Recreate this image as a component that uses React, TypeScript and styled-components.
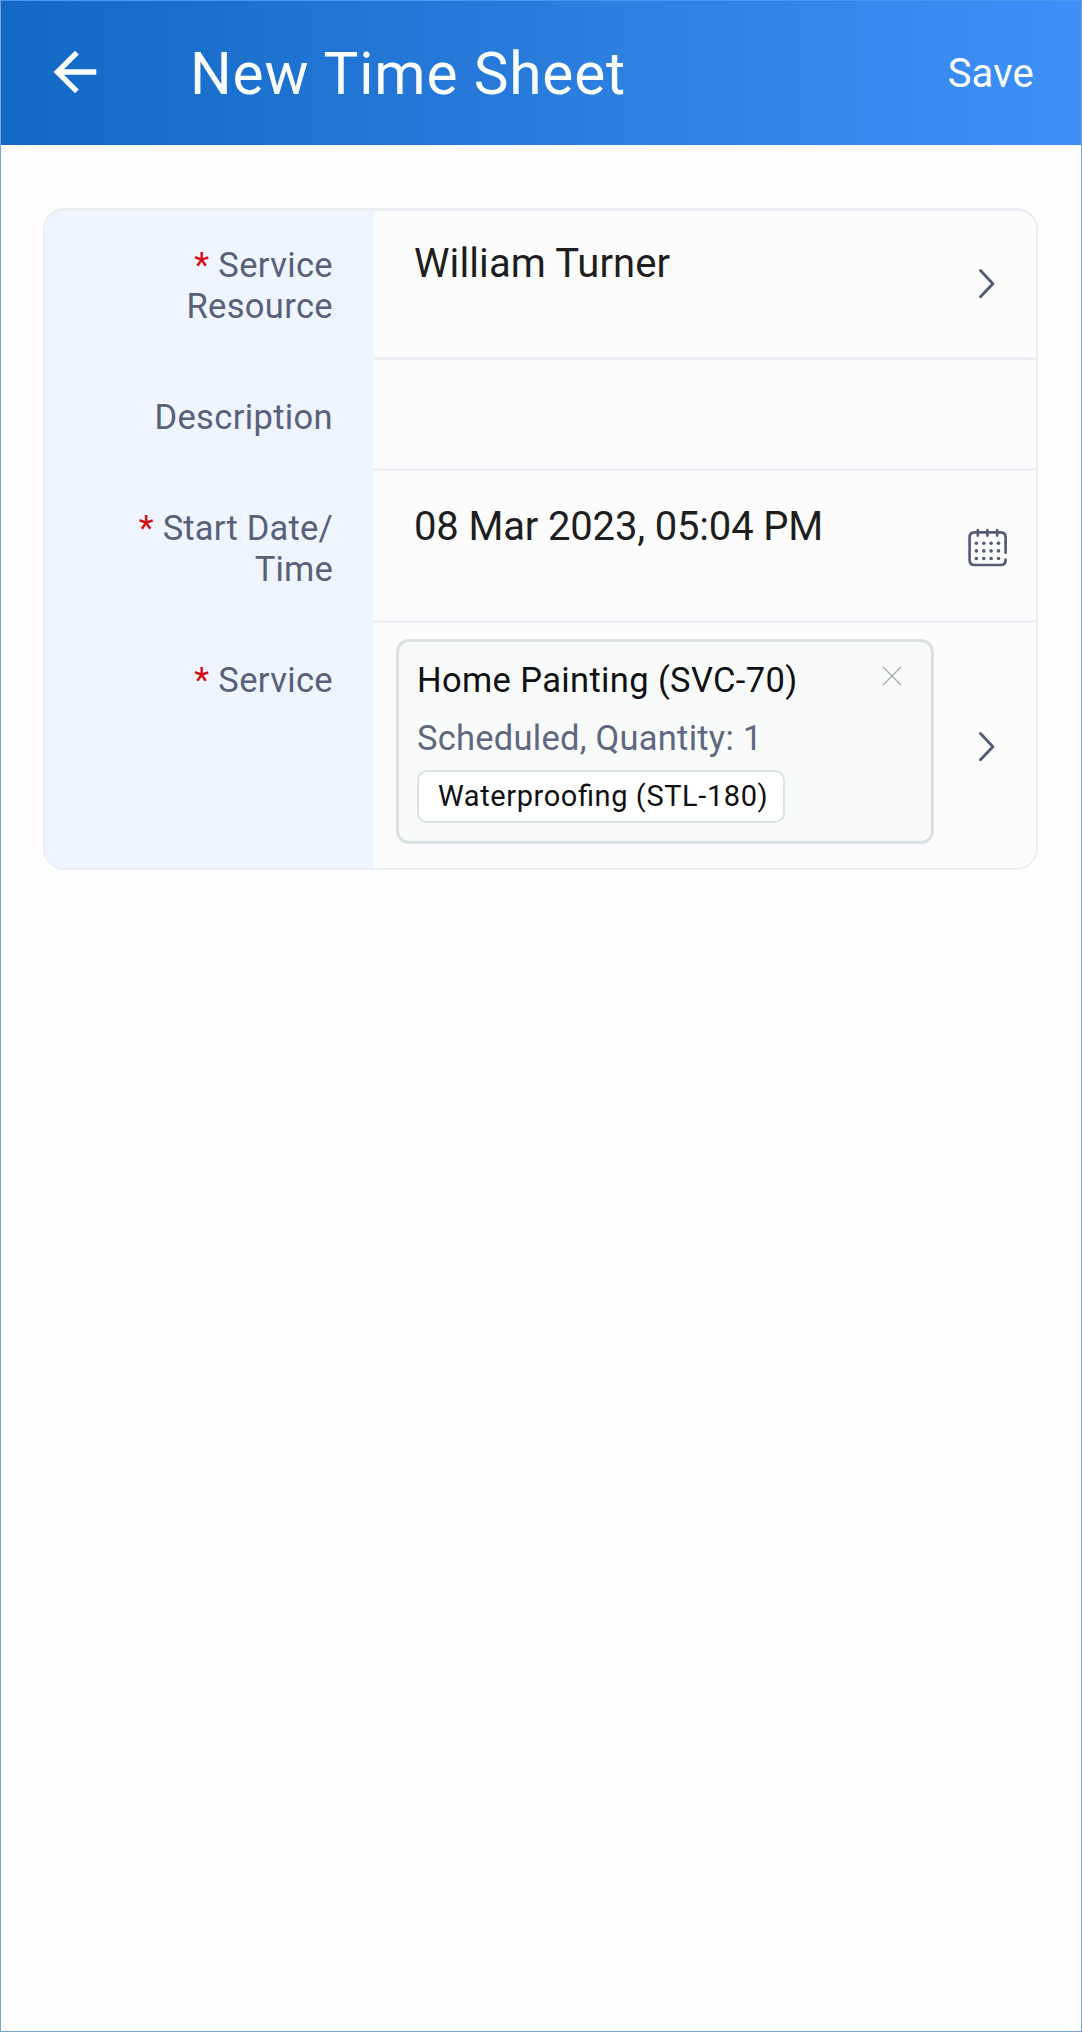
import React from 'react';
import styled, { createGlobalStyle } from 'styled-components';

const GlobalStyle = createGlobalStyle`
  *, *::before, *::after { box-sizing: border-box; }
  body { margin: 0; background: #fefefe; font-family: Roboto, "Liberation Sans", sans-serif; }
  button { border: 0; padding: 0; background: none; font: inherit; color: inherit; }
`;

const Screen = styled.div`
  display: flex;
  flex-direction: column;
  width: 1082px;
  height: 2032px;
  border: 1px solid #76a5d4;
  border-top-color: #4b98f2;
  background: #fefefe;
`;

const Header = styled.header`
  display: flex;
  align-items: center;
  height: 144px;
  padding: 0 47px 0 42px;
  background: linear-gradient(90deg, #1268c3 0%, #2a7cdc 50%, #3e90f7 100%);
  color: #fafeff;
`;

const BackButton = styled.button`
  display: flex;
  width: 64px;
  height: 64px;
  margin-top: -3px;
`;

const Title = styled.h1`
  flex: 1;
  margin: 2px 0 0 83px;
  font-size: 58.5px;
  line-height: 70px;
  font-weight: 400;
  letter-spacing: 0.85px;
`;

const SaveButton = styled.button`
  margin-top: 2px;
  font-size: 40px;
  line-height: 48px;
  letter-spacing: 0.2px;
`;

const Card = styled.section`
  margin: 63px 43px 0 42px;
  border: 2px solid #ebeff3;
  border-top-width: 3px;
  border-radius: 21px;
  background: #fcfcfd;
  overflow: hidden;
`;

const Row = styled.div<{ $height: number }>`
  display: grid;
  grid-template-columns: 329px 1fr;
  height: ${(p) => p.$height}px;
`;

const Label = styled.div<{ $top: number; $tracking?: number }>`
  padding: ${(p) => p.$top}px 41px 0 60px;
  background: #eef5fe;
  color: #596179;
  font-size: 34.5px;
  line-height: 41px;
  letter-spacing: ${(p) => p.$tracking ?? 0.35}px;
  text-align: right;
`;

const Required = styled.span`
  color: #d50c14;
`;

const Cell = styled.div<{ $last?: boolean }>`
  display: flex;
  justify-content: space-between;
  align-items: center;
  padding: 0 27px 0 22px;
  border-bottom: ${(p) => (p.$last ? 0 : 3)}px solid #ebeff3;
`;

const Value = styled.div<{ $top: number; $tracking: number }>`
  align-self: flex-start;
  padding: ${(p) => p.$top}px 0 0 18px;
  color: #1e1e1f;
  font-size: 40px;
  line-height: 47px;
  letter-spacing: ${(p) => p.$tracking}px;
  white-space: nowrap;
`;

const IconSlot = styled.span<{ $drop?: number }>`
  display: flex;
  width: 44px;
  height: 44px;
  margin-top: ${(p) => p.$drop ?? 0}px;
`;

const ServiceBox = styled.div`
  display: flex;
  align-items: flex-start;
  justify-content: space-between;
  align-self: flex-start;
  width: 538px;
  height: 205px;
  margin-top: 16px;
  padding: 18px 29px 0 18px;
  border: 3px solid #dae2e6;
  border-radius: 13px;
  background: #f9fbfa;
`;

const ServiceText = styled.div`
  display: flex;
  flex-direction: column;
  align-items: flex-start;
  white-space: nowrap;
`;

const ServiceName = styled.div`
  font-size: 34.5px;
  line-height: 41px;
  letter-spacing: 0.36px;
  color: #0f1013;
`;

const ServiceMeta = styled.div`
  margin-top: 17px;
  font-size: 34.5px;
  line-height: 41px;
  letter-spacing: 0.25px;
  color: #5f6880;
`;

const Tag = styled.div`
  display: flex;
  align-items: center;
  height: 53px;
  margin-top: 11px;
  padding: 0 15px 1px 19px;
  border: 2px solid #dae2e6;
  border-radius: 10px;
  background: #fff;
  color: #0f1013;
  font-size: 29px;
  line-height: 34px;
  letter-spacing: 0.59px;
  font-feature-settings: "liga" 1;
`;

const RemoveButton = styled.button`
  display: flex;
  margin-top: 6px;
`;

const ArrowLeft = () => (
  <svg width="64" height="64" viewBox="0 0 24 24" fill="currentColor">
    <path d="M20 11H7.83l5.59-5.59L12 4l-8 8 8 8 1.41-1.41L7.83 13H20v-2z" />
  </svg>
);

const Chevron = () => (
  <svg width="44" height="44" viewBox="0 0 44 44" fill="none" stroke="#555d75" strokeWidth="2.9" strokeLinecap="round" strokeLinejoin="round">
    <path d="M15.5 8.6 27.9 21.7 15.5 34.8" />
  </svg>
);

const dots = [11.4, 18.8, 26.1, 33.5];

const Calendar = () => (
  <svg width="44" height="44" viewBox="0 0 44 44" fill="none" stroke="#555d75" strokeWidth="2.7" strokeLinecap="round">
    <path d="M40.6 26.7V11.3Q40.6 6.3 35.6 6.3H9.6Q4.6 6.3 4.6 11.3V34Q4.6 39 9.6 39H35.6Q40.6 39 40.6 34V33.7" />
    <path d="M12.8 4.2V9.6M22.4 4.2V9.6M32.2 4.2V9.6" />
    <g fill="#555d75" stroke="none">
      {[17.3, 24.9, 32.5].map((y) => dots.map((x) => <circle key={`${x}-${y}`} cx={x} cy={y} r="1.8" />))}
    </g>
  </svg>
);

const Close = () => (
  <svg width="20" height="20" viewBox="0 0 20 20" fill="none" stroke="#a8abb1" strokeWidth="1.3">
    <path d="M.8.8 19.2 19.2M19.2.8.8 19.2" />
  </svg>
);

export default function App() {
  return (
    <>
      <GlobalStyle />
      <Screen>
        <Header>
          <BackButton aria-label="Back"><ArrowLeft /></BackButton>
          <Title>New Time Sheet</Title>
          <SaveButton>Save</SaveButton>
        </Header>
        <Card>
          <Row $height={149}>
            <Label $top={34}><Required>*</Required> Service<br />Resource</Label>
            <Cell>
              <Value $top={29} $tracking={0.1}>William Turner</Value>
              <IconSlot><Chevron /></IconSlot>
            </Cell>
          </Row>
          <Row $height={111}>
            <Label $top={37}>Description</Label>
            <Cell />
          </Row>
          <Row $height={152}>
            <Label $top={37} $tracking={0.2}><Required>*</Required> Start Date/<br />Time</Label>
            <Cell>
              <Value $top={32} $tracking={-0.16}>08 Mar 2023, 05:04 PM</Value>
              <IconSlot $drop={5}><Calendar /></IconSlot>
            </Cell>
          </Row>
          <Row $height={245}>
            <Label $top={37}><Required>*</Required> Service</Label>
            <Cell $last>
              <ServiceBox>
                <ServiceText>
                  <ServiceName>Home Painting (SVC-70)</ServiceName>
                  <ServiceMeta>Scheduled, Quantity: 1</ServiceMeta>
                  <Tag>Waterproofing (STL-180)</Tag>
                </ServiceText>
                <RemoveButton aria-label="Remove"><Close /></RemoveButton>
              </ServiceBox>
              <IconSlot $drop={2}><Chevron /></IconSlot>
            </Cell>
          </Row>
        </Card>
      </Screen>
    </>
  );
}
